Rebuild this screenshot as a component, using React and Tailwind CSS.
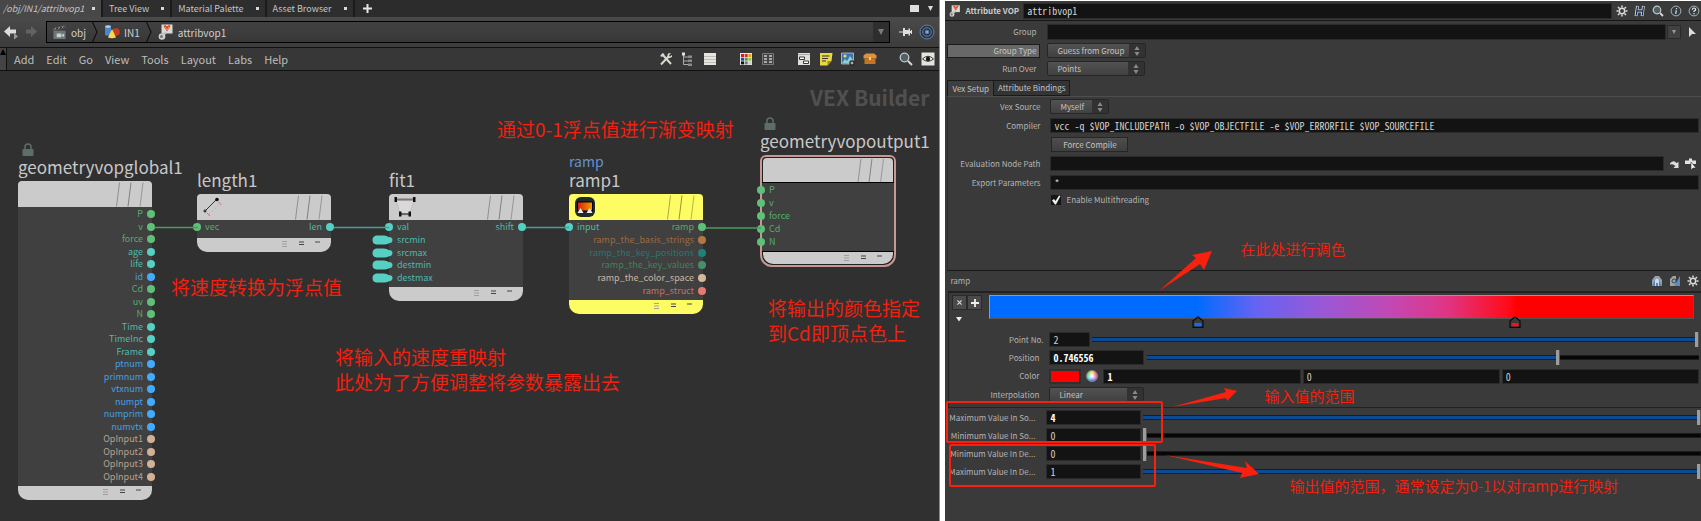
import React from "react";

const GREEN = { text: "text-[#55ab6b]", dot: "bg-[#5fc177]" };
const TEAL = { text: "text-[#4fb8ab]", dot: "bg-[#55d0c3]" };
const BLUE = { text: "text-[#459fe0]", dot: "bg-[#43abff]" };
const SAND = { text: "text-[#b9a08c]", dot: "bg-[#d0b196]" };
const BROWN = { text: "text-[#9c6a3f]", dot: "bg-[#b07740]" };
const DEEP = { text: "text-[#28766f]", dot: "bg-[#21817a]" };
const MOSS = { text: "text-[#44805d]", dot: "bg-[#469068]" };
const CREAM = { text: "text-[#c9b5a2]", dot: "bg-[#d5b898]" };
const ROSE = { text: "text-[#cc6c66]", dot: "bg-[#e37b72]" };

/* ---------- node graph ---------- */

function Port({ name, tone, side, pill }) {
  const dot = pill ? (
    <svg className="-ml-[17px] h-[10px] w-[21px] shrink-0" viewBox="0 0 21 10">
      <path d="M4.500 .5H12q3 0 4.500 1.500Q20.500 2 20.500 5T16.500 8.500Q15 9.500 12 9.500H4.500Q.5 9 .5 5T4.500.5Z" fill="#55d0c3" />
    </svg>
  ) : (
    <span className={"size-2 shrink-0 rounded-full " + tone.dot + (side === "in" ? " -ml-1" : " -mr-[3px]")} />
  );
  return (
    <li className={"flex h-3 items-center gap-1 text-[9px] leading-3 " + (side === "in" ? "flex-row" : "flex-row-reverse")}>
      {dot}
      <span className={tone.text}>{name}</span>
    </li>
  );
}

function Slashes({ dim }) {
  return (
    <svg className="ml-auto mr-[6px] h-full w-8" viewBox="0 0 32 25" fill="none" stroke={dim}>
      <path d="M5.500 1 2.500 25" strokeWidth="0.800" />
      <path d="M17 1 14 25" />
      <path d="M29 1 26 25" strokeWidth="0.700" />
    </svg>
  );
}

function Node({ place, title, kind, icon, inputs = [], outputs = [], yellow, selected, lock, body }) {
  const fill = yellow ? "bg-[#fdfd63]" : "bg-[#cbcbcb]";
  return (
    <section className={"absolute " + place}>
      <div className="absolute bottom-full left-0 flex flex-col whitespace-nowrap pb-1">
        {lock && <Lock />}
        {kind && <span className="text-[14px] leading-[18px] text-[#6490cd]">{kind}</span>}
        <h2 className="text-[17px] leading-5 text-[#c8c8c8]">{title}</h2>
      </div>
      <div className={selected ? "rounded-t-md rounded-b-xl border-2 border-[#c59896] bg-[#222] p-px" : ""}>
        <div className={"flex items-center rounded-t-[4px] pl-[5px] " + fill + (selected ? " h-6" : " h-[26px]")}>
          {icon}
          <Slashes dim={yellow ? "#96963c" : "#808080"} />
        </div>
        <div className={"grid bg-[#404040] pb-[3px] pt-px " + body + (selected ? " border-y border-black -mx-px" : "")}>
          <ul className={"col-start-1 row-start-1 flex flex-col justify-between justify-self-start" + (selected ? " -ml-px" : "")}>
            {inputs.map((p) => (
              <Port key={p[0]} name={p[0]} tone={p[1]} pill={p[2]} side="in" />
            ))}
          </ul>
          <ul className="col-start-1 row-start-1 flex flex-col justify-between justify-self-end">
            {outputs.map((p) => (
              <Port key={p[0]} name={p[0]} tone={p[1]} side="out" />
            ))}
          </ul>
        </div>
        <div className={"flex justify-end rounded-b-[10px] pr-[10px] " + fill + (selected ? " h-3" : " h-[14px]")}>
          <svg className="h-3 w-10" viewBox="0 0 40 12" fill="none">
            <path d="M1 3.500h5M1 6h5M1 8.500h5" stroke="#999" strokeWidth="0.900" />
            <path d="M18 4h5M18 6.500h5" stroke="#444" strokeWidth="1.200" />
            <path d="M34 4h5" stroke="#555" strokeWidth="1.100" />
          </svg>
        </div>
      </div>
    </section>
  );
}

function Lock() {
  return (
    <svg className="ml-1 h-[14px] w-3" viewBox="0 0 12 14">
      <path d="M3 7V4a3 3 0 0 1 6 0v3" fill="none" stroke="#5d6d69" strokeWidth="1.500" />
      <rect x="0.500" y="6" width="11" height="7" rx="1" fill="#5d6d69" />
    </svg>
  );
}

const LengthIcon = (
  <svg className="size-5" viewBox="0 0 20 20">
    <path d="M3 14 15 2" stroke="#333" />
    <circle cx="3" cy="14" r="1.200" fill="#555" stroke="#222" strokeWidth="0.600" />
    <circle cx="15" cy="2.500" r="1.800" fill="#111" />
    <path d="M7 17.500 18 7" stroke="#c99" strokeWidth="0.900" strokeDasharray="1.500 2.500" />
    <path d="m5 16 3 3M16.500 5l3 3" stroke="#c66" strokeWidth="0.900" />
  </svg>
);

const FitIcon = (
  <svg className="h-[22px] w-[22px]" viewBox="0 0 22 22">
    <path d="M2 4h18l-4.500 15h-9Z" fill="#d9d9d9" stroke="#c9a9a9" strokeWidth="0.600" />
    <path d="M2 3.500h18" stroke="#777" strokeWidth="2" />
    <path d="M6 18h10" stroke="#222" strokeWidth="1.200" />
    <path d="M.5 1h2.500v5H.5zM19 1h2.500v5H19zM5 15.500h2.500v5H5zM14.500 15.500H17v5h-2.500z" fill="#111" />
  </svg>
);

const RampIcon = (
  <svg className="h-[22px] w-[22px]" viewBox="0 0 22 22">
    <defs>
      <linearGradient id="fire">
        <stop offset="0" stopColor="#d81e05" />
        <stop offset="1" stopColor="#f0a000" />
      </linearGradient>
    </defs>
    <rect x="1" y="1" width="20" height="20" rx="6" fill="#1e2a2c" />
    <rect x="3.500" y="6" width="15" height="9" fill="url(#fire)" stroke="#000" />
    <path d="m6.500 12 3 5h-6zM15.500 12l3 5h-6z" fill="#eee" />
  </svg>
);

const globals = [
  ["P", GREEN], ["v", GREEN], ["force", GREEN], ["age", TEAL], ["life", TEAL], ["id", BLUE],
  ["Cd", GREEN], ["uv", GREEN], ["N", GREEN], ["Time", TEAL], ["TimeInc", TEAL], ["Frame", TEAL],
  ["ptnum", BLUE], ["primnum", BLUE], ["vtxnum", BLUE], ["numpt", BLUE], ["numprim", BLUE],
  ["numvtx", BLUE], ["OpInput1", SAND], ["OpInput2", SAND], ["OpInput3", SAND], ["OpInput4", SAND],
];

function Graph() {
  return (
    <main className="relative min-h-[450px] flex-1 overflow-hidden bg-[#303030]">
      <p className="absolute right-[10px] top-[10px] text-[21px] font-bold leading-8 text-[#505050]">VEX Builder</p>
      <Node place="left-[18px] top-[110px] w-[134px]" title="geometryvopglobal1" lock outputs={globals} body="h-[279px]" />
      <Node place="left-[197px] top-[123px] w-[134px]" title="length1" icon={LengthIcon} inputs={[["vec", GREEN]]} outputs={[["len", TEAL]]} body="h-[18px]" />
      <Node
        place="left-[389px] top-[123px] w-[134px]"
        title="fit1"
        icon={FitIcon}
        inputs={[["val", TEAL], ["srcmin", TEAL, true], ["srcmax", TEAL, true], ["destmin", TEAL, true], ["destmax", TEAL, true]]}
        outputs={[["shift", TEAL]]}
        body="h-[67px]"
      />
      <Node
        place="left-[569px] top-[123px] w-[134px]"
        title="ramp1"
        kind="ramp"
        yellow
        icon={RampIcon}
        inputs={[["input", TEAL]]}
        outputs={[
          ["ramp", GREEN], ["ramp_the_basis_strings", BROWN], ["ramp_the_key_positions", DEEP],
          ["ramp_the_key_values", MOSS], ["ramp_the_color_space", CREAM], ["ramp_struct", ROSE],
        ]}
        body="h-[80px]"
      />
      <Node
        place="left-[760px] top-[84px] w-[136px]"
        title="geometryvopoutput1"
        lock
        selected
        inputs={[["P", GREEN], ["v", GREEN], ["force", GREEN], ["Cd", GREEN], ["N", GREEN]]}
        body="h-[70px]"
      />
      <svg className="pointer-events-none absolute left-0 top-0 h-[450px] w-[940px]" viewBox="0 0 940 450" strokeWidth="1.300">
        <path d="M154 156.500H198M706 157H761" stroke="#4c9a62" />
        <path d="M334 156.500H389M526 156.500H569" stroke="#459f96" />
      </svg>
      <Note place="left-[497px] top-[45px]">通过0-1浮点值进行渐变映射</Note>
      <Note place="left-[171px] top-[203px]">将速度转换为浮点值</Note>
      <Note place="left-[335px] top-[273px]">
        将输入的速度重映射
        <br />
        此处为了方便调整将参数暴露出去
      </Note>
      <Note place="left-[768px] top-[224px]">
        将输出的颜色指定
        <br />
        到Cd即顶点色上
      </Note>
    </main>
  );
}

function Note({ place, small, children }) {
  return (
    <p className={"absolute whitespace-nowrap text-[#f2200f] " + (small ? "text-[15px] leading-5 " : "text-[19px] leading-[25px] ") + place}>
      {children}
    </p>
  );
}

/* ---------- left pane bars ---------- */

function Tab({ children, active }) {
  return (
    <div
      className={
        "flex h-full items-center border-r-2 border-[#1b1b1b] text-[9px] " +
        (active ? "w-[103px] bg-[#484848] pl-[3px] pr-1 italic text-[#c4c4c4]" : "gap-[10px] bg-[#2e2e2e] pl-[6px] pr-1 text-[#c4c4c4]")
      }
    >
      <button className="flex-1 text-left">{children}</button>
      <button aria-label="Close tab" className="flex size-[7px] items-center justify-center">
        <span className="size-[3px] bg-[#d8d8d8]" />
      </button>
    </div>
  );
}

function Chevron() {
  return (
    <svg className="h-5 w-[6px]" viewBox="0 0 6 20" fill="none">
      <path d="M.5 0 5 10 .5 20" stroke="#111" strokeWidth="1.200" />
    </svg>
  );
}

function VopIcon({ className }) {
  return (
    <svg className={className} viewBox="0 0 16 16">
      <rect x="3.500" y="0.500" width="11" height="9" fill="#d9d9d9" />
      <path d="m5.500 2 1.500-1 2 1.500L11 1l1.500 1L9 7.500Z" fill="#d33e25" />
      <path d="M7 2.500 9 6l2-3.500" stroke="#e7a334" fill="none" />
      <path d="M8 8.500 5.500 11" stroke="#bbb" strokeWidth="2" />
      <circle cx="4" cy="12.500" r="3.300" fill="#cfcfcf" />
      <circle cx="3.500" cy="12.500" r="1.500" fill="#777" />
    </svg>
  );
}

function PathBar() {
  return (
    <div className="flex h-[30px] items-center bg-linear-to-b from-[#4a4a4a] to-[#3c3c3c] pl-[3px] pr-1">
      <button aria-label="Back" className="size-4">
        <svg viewBox="0 0 16 16">
          <path d="M1 7.500 7 2v3.500h6v4H7V13Z" fill="#deded8" />
          <path d="m11 9 4 3.500-4 3Z" fill="#999" />
        </svg>
      </button>
      <button aria-label="Forward" className="ml-1 size-4">
        <svg viewBox="0 0 16 16">
          <path d="M14 7.500 8 2v3.500H3v4h5V13Z" fill="#626262" />
        </svg>
      </button>
      <nav className="ml-[7px] flex h-[22px] flex-1 items-center border border-black bg-linear-to-b from-[#414141] to-[#383838] text-[10px] text-[#cfcfcf]">
        <a href="#obj" className="flex items-center gap-1 pl-[5px] pr-[6px]">
          <svg className="size-[15px]" viewBox="0 0 16 16">
            <path d="m1 4 13-3.500.5 2L1.500 6Z" fill="#333" stroke="#777" strokeWidth="0.500" />
            <path d="m3 5 1-2m3 1 1-2m3 1 1-2" stroke="#aaa" />
            <rect x="1.500" y="6" width="13" height="9" fill="#6b7676" />
            <path d="M5 9h5v4H5zM10 11l3-2v4Z" fill="#c9cfcf" />
          </svg>
          obj
        </a>
        <Chevron />
        <a href="#in1" className="flex items-center gap-1 pl-[6px] pr-[6px]">
          <svg className="size-4" viewBox="0 0 16 16">
            <path d="M1 2.500q3-1.500 6 0V11q-3 1.500-6 0Z" fill="#4b86cf" />
            <ellipse cx="4" cy="2.600" rx="3" ry="1.300" fill="#a9cbef" />
            <circle cx="12" cy="8" r="3.800" fill="#cb3a21" />
            <path d="m8 5 4 8.500q-4 1.500-8 0Z" fill="#f5dc4a" />
          </svg>
          IN1
        </a>
        <Chevron />
        <a href="#attribvop1" className="flex items-center gap-1 pl-[6px]">
          <VopIcon className="size-4" />
          attribvop1
        </a>
        <button aria-label="Path history" className="ml-auto flex h-full w-4 items-center justify-center bg-[#2e2e2e]">
          <svg className="size-[6px]" viewBox="0 0 6 6">
            <path d="M0 0h6L3 6Z" fill="#7b7b7b" />
          </svg>
        </button>
      </nav>
      <button aria-label="Pin" className="ml-2 h-4 w-[15px]">
        <svg viewBox="0 0 15 16" fill="#dedede">
          <path d="M1 7.500h5v1H1zM5 4h2v8H5zM7 6h3.500v4H7zM10.500 4.500h1.500V7h1v2h-1v2.500h-1.500zM13 6h1v4h-1z" />
        </svg>
      </button>
      <button aria-label="Follow selection" className="ml-[6px] size-4">
        <svg viewBox="0 0 16 16" fill="none" stroke="#5f80ab">
          <circle cx="8" cy="8" r="7" fill="#2b3442" />
          <circle cx="8" cy="8" r="4.300" />
          <circle cx="8" cy="8" r="1.800" fill="#7ca6dc" />
        </svg>
      </button>
    </div>
  );
}

function Tool({ label, gap, children }) {
  return (
    <button aria-label={label} className={"size-[14px] " + (gap || "ml-[8px]")}>
      <svg viewBox="0 0 14 14">{children}</svg>
    </button>
  );
}

function MenuBar() {
  const menus = ["Add", "Edit", "Go", "View", "Tools", "Layout", "Labs", "Help"];
  return (
    <div className="flex h-6 items-center border-y border-[#111] bg-[#373737] pr-1">
      <button aria-label="Collapse" className="mr-[7px] flex h-full w-[7px] items-start border-r border-[#111] bg-[#444]">
        <svg className="mt-px h-[6px] w-[6px]" viewBox="0 0 6 6">
          <path d="M3 0 6 6H0Z" fill="#000" />
        </svg>
      </button>
      <div className="flex gap-3 text-[11px] leading-5 text-[#bdbdbd]">
        {menus.map((m) => (
          <button key={m}>{m}</button>
        ))}
      </div>
      <div className="ml-auto flex items-center">
        <Tool label="Tools" gap="ml-0">
          <path d="M2 12.500 9 5M3 2l9 10" stroke="#d8d8d0" strokeWidth="2" />
          <path d="M1 4 4 1l1.500 1.500L3 5ZM9 1.500 8 5l1.500 1.500L13 5V3l-2 1.500L10 3.500 12 1Z" fill="#d8d8d0" />
        </Tool>
        <Tool label="Tree">
          <path d="M2.500 2v10.500h5M2.500 5H8M2.500 9H8" stroke="#aaa" fill="none" />
          <path d="M1 .5h3v3H1z" fill="#e2e2e2" />
          <path d="M7 3.500h4V6H7zM7 7.500h4V10H7zM7 11.500h4V14H7z" fill="#8c8c8c" />
        </Tool>
        <Tool label="List">
          <path d="M1 1h12v12H1z" fill="#e5e5de" />
          <path d="M1 4.500h12M1 7.500h12M1 10.500h12" stroke="#b5b5ad" strokeWidth="0.800" />
        </Tool>
        <Tool label="Palette" gap="ml-[22px]">
          <path d="M1 1h12v12H1z" fill="#e8e8e8" />
          <path d="M2 2h3v3H2z" fill="#e11" />
          <path d="M5.700 2h3v3h-3z" fill="#c33" />
          <path d="M9.400 2h3v3h-3z" fill="#e9a21b" />
          <path d="M2 5.700h3v3H2z" fill="#234b96" />
          <path d="M5.700 5.700h3v3h-3z" fill="#4a9a3c" />
          <path d="M9.400 5.700h3v3h-3z" fill="#8dc63f" />
          <path d="M2 9.400h3v3H2z" fill="#111" />
          <path d="M5.700 9.400h3v3h-3z" fill="#777" />
          <path d="M9.400 9.400h3v3h-3z" fill="#ccc" />
        </Tool>
        <Tool label="Table">
          <path d="M1.500 1.500h11v11h-11z" fill="#444" stroke="#777" />
          <path d="M3 4h3M8 4h3M3 7h3M8 7h3M3 10h3M8 10h3" stroke="#ccc" strokeWidth="1.300" />
        </Tool>
        <Tool label="Network box" gap="ml-[22px]">
          <path d="M1 1h12v12H1z" fill="#e0e0da" />
          <path d="M1 2.500h12" stroke="#999" strokeWidth="0.800" />
          <path d="M2.500 5h5v2.500h-5zM6.500 9h5v2.500h-5z" fill="#fff" stroke="#222" strokeWidth="0.900" />
        </Tool>
        <Tool label="Sticky note">
          <path d="M1 1h12.500l-1 8-4 4.500H1Z" fill="#ecd842" />
          <path d="m12.500 9-4 4.500V9Z" fill="#9b8b20" />
          <path d="M3 4h7.500M3 6.500h6M3 9h4" stroke="#333" strokeWidth="1.100" />
        </Tool>
        <Tool label="Background image">
          <path d="M.5 1h12v11H.5z" fill="#3f74b3" stroke="#cfd8dd" strokeWidth="0.700" />
          <path d="m1 11 3-4 2 2 3-5 3 4v4Z" fill="#8ecfd0" />
          <circle cx="4" cy="4" r="1.500" fill="#f3dd4b" />
          <circle cx="11" cy="11" r="2.700" fill="#222" />
          <path d="M9.500 11h3M11 9.500v3" stroke="#fff" strokeWidth="0.800" />
        </Tool>
        <Tool label="Gallery">
          <path d="M.5 3.500 3 1.500h8l2.500 2V6.500H.5Z" fill="#e0923a" />
          <path d="M1.500 6.500h11v5.500h-11Z" fill="#c57422" />
          <path d="M6 5h2v3H6z" fill="#f6cf8f" />
        </Tool>
        <Tool label="Find" gap="ml-[22px]">
          <circle cx="5.500" cy="5.500" r="4.300" fill="#50616a" stroke="#c4c8c8" strokeWidth="1.300" />
          <path d="m9 9 4 4" stroke="#d8d8d8" strokeWidth="2" />
        </Tool>
        <Tool label="Display options">
          <path d="M.5.5h13v13H.5z" fill="#e4e4de" />
          <path d="M1.500 7Q7 1.500 12.500 7 7 11.500 1.500 7Z" fill="#fff" stroke="#333" />
          <circle cx="7" cy="7" r="2.300" fill="#1a1a1a" />
        </Tool>
      </div>
    </div>
  );
}

/* ---------- parameter pane ---------- */

const fieldBase = "min-w-0 border border-[#2b2b2b] bg-[#131313] px-[3px] font-['Noto_Sans_Mono_CJK_SC','DejaVu_Sans_Mono',monospace] text-[10px] leading-3 outline-none ";
const field = fieldBase + "h-[15px] text-[#cfcfcf] ";
const boldField = fieldBase + "h-[15px] font-bold text-white ";
const tallField = fieldBase + "h-4 text-[#cfcfcf] ";

function Label({ htmlFor, children, wide = "w-[94px]" }) {
  return (
    <label htmlFor={htmlFor} className={"shrink-0 whitespace-nowrap text-right text-[8px] leading-3 text-[#b4b4b4] " + wide}>
      {children}
    </label>
  );
}

function Picker({ id, value, width }) {
  return (
    <div className={"grid h-[15px] shrink-0 rounded-[2px] border border-[#262626] bg-linear-to-b from-[#525252] to-[#414141] " + width}>
      <select
        id={id}
        className="col-start-1 row-start-1 appearance-none bg-transparent pl-[9px] text-[8px] leading-3 text-[#c4c4c4] outline-none"
      >
        <option>{value}</option>
      </select>
      <span className="pointer-events-none col-start-1 row-start-1 ml-auto flex h-full w-4 items-center justify-center bg-[#323232]">
        <svg className="h-[10px] w-[6px]" viewBox="0 0 6 10" fill="#8a8a8a">
          <path d="m3 0 2.500 4h-5ZM3 10 .5 6h5Z" />
        </svg>
      </span>
    </div>
  );
}

function Slider({ label, value, max = 1 }) {
  const pct = (value / max) * 100;
  return (
    <input
      type="range"
      aria-label={label}
      min="0"
      max={max}
      step="any"
      defaultValue={value}
      className="h-[15px] min-w-0 flex-1 appearance-none bg-[length:100%_5px] bg-center bg-no-repeat outline-none [&::-webkit-slider-thumb]:h-[15px] [&::-webkit-slider-thumb]:w-1 [&::-webkit-slider-thumb]:appearance-none [&::-webkit-slider-thumb]:border-r [&::-webkit-slider-thumb]:border-[#555] [&::-webkit-slider-thumb]:bg-[#9c9c9c]"
      style={{
        backgroundImage: `linear-gradient(180deg, #1c1c1c 1px, transparent 1px, transparent 4px, #1c1c1c 4px), linear-gradient(90deg, #0c4a94 ${pct}%, #060606 ${pct}%)`,
      }}
    />
  );
}

function Gear() {
  return (
    <g fill="none" stroke="#dcdcdc">
      <circle cx="6" cy="6" r="2.700" strokeWidth="1.500" />
      <path d="M6 .5v2M6 9.500v2M.5 6h2M9.500 6h2M2 2l1.500 1.500M8.500 8.500 10 10M10 2 8.500 3.500M3.500 8.500 2 10" strokeWidth="1.500" />
    </g>
  );
}

function SmallIcon({ label, children }) {
  return (
    <button aria-label={label} className="size-3 shrink-0">
      <svg viewBox="0 0 12 12">{children}</svg>
    </button>
  );
}

function SpareRow({ id, label, value, slide, max, bold }) {
  return (
    <div className="flex items-center">
      <Label htmlFor={id} wide="w-[90px]">{label}</Label>
      <input id={id} defaultValue={value} className={(bold ? boldField : field) + "ml-[11px] w-[95px]"} />
      <span className="w-[2px]" />
      <Slider label={label + " slider"} value={slide} max={max} />
    </div>
  );
}

function Marker({ color, at }) {
  return (
    <svg className="absolute top-5 h-3 w-3 -translate-x-1/2" viewBox="0 0 12 12" style={{ left: at }}>
      <path d="M1 11.300V5L6 .8 11 5v6.300Z" fill="#3a3a3a" stroke="#0b0b0b" strokeWidth="1.200" />
      <path d="M2.500 7h7v3.300h-7z" fill={color} />
    </svg>
  );
}

function Parameters() {
  return (
    <aside className="relative mt-px flex min-w-0 flex-[756_1_0%] flex-col overflow-hidden bg-[#3a3a3a]">
      <header className="flex h-5 items-center gap-1 border-b border-[#161616] pl-1 pr-px">
        <VopIcon className="size-3 shrink-0" />
        <h1 className="whitespace-nowrap text-[8px] font-bold text-[#cccccc]">Attribute VOP</h1>
        <input aria-label="Operator name" defaultValue="attribvop1" className={tallField + "flex-1"} />
        <div className="flex gap-[6px]">
          <SmallIcon label="Settings"><Gear /></SmallIcon>
          <SmallIcon label="Houdini help">
            <path d="M3.500 1 2 11M9.500 1 8 11M3 6h6" stroke="#e3e3e3" strokeWidth="2.800" />
            <path d="M3.500 1.500 2.200 10.500M9.500 1.500 8.200 10.500M3 6h6" stroke="#12305a" strokeWidth="1.400" />
          </SmallIcon>
          <SmallIcon label="Search">
            <circle cx="5" cy="5" r="3.800" fill="#50616a" stroke="#c4c8c8" strokeWidth="1.200" />
            <path d="m8 8 3 3" stroke="#d8d8d8" strokeWidth="1.800" />
          </SmallIcon>
          <SmallIcon label="Info">
            <circle cx="6" cy="6" r="4.900" fill="#333c40" stroke="#a9b3b3" />
            <path d="M6.500 3v1.200M6.300 5.200 5.700 9" stroke="#e0e0e0" strokeWidth="1.200" />
          </SmallIcon>
          <SmallIcon label="Help">
            <circle cx="6" cy="6" r="4.900" fill="#333c40" stroke="#a9b3b3" />
            <path d="M4.300 4.700Q4.500 3 6 3t1.700 1.500Q7.700 5.500 6 6.200V7M6 8v1.200" fill="none" stroke="#eee" strokeWidth="1.200" />
          </SmallIcon>
        </div>
      </header>

      <div className="flex flex-col gap-[3px] pb-1 pl-[2px] pt-[3px]">
        <div className="flex items-center pr-1">
          <Label htmlFor="group" wide="w-[89px]">Group</Label>
          <input id="group" className={tallField + "ml-[11px] flex-1"} />
          <button aria-label="Group menu" className="ml-px flex size-[14px] items-center justify-center border border-[#2a2a2a] bg-[#414141]">
            <svg className="size-1" viewBox="0 0 6 6"><path d="M0 0h6L3 6Z" fill="#999" /></svg>
          </button>
          <button aria-label="Pick group" className="ml-1 size-3">
            <svg viewBox="0 0 12 12"><path d="M4 1v10l3-3h4Z" fill="#dedede" /></svg>
          </button>
        </div>
        <div className="flex h-[15px] items-center">
          <label htmlFor="grouptype" className="h-[14px] w-[93px] border border-[#1c1c1c] bg-[#686868] pr-[3px] text-right text-[8px] leading-3 text-[#c4c4c4]">
            Group Type
          </label>
          <span className="w-[7px]" />
          <Picker id="grouptype" value="Guess from Group" width="w-[99px]" />
        </div>
        <div className="flex items-center">
          <Label htmlFor="runover" wide="w-[89px]">Run Over</Label>
          <span className="w-[11px]" />
          <Picker id="runover" value="Points" width="w-[98px]" />
        </div>
      </div>

      <div role="tablist" className="flex h-4 pl-[2px] text-[8px] leading-[14px] text-[#c4c4c4]">
        <button role="tab" aria-selected="true" className="border border-b-0 border-[#1a1a1a] bg-[#3f3f3f] px-1">Vex Setup</button>
        <button role="tab" aria-selected="false" className="border border-l-0 border-[#1a1a1a] bg-[#343434] px-1">Attribute Bindings</button>
      </div>
      <section className="ml-[2px] flex h-[175px] shrink-0 flex-col gap-1 border-b border-l border-t border-b-[#181818] border-l-[#2b2b2b] border-t-[#4d4d4d] pr-[2px] pt-[2px]">
        <div className="flex items-center gap-[10px]">
          <Label htmlFor="vexsource" wide="w-[92px]">Vex Source</Label>
          <Picker id="vexsource" value="Myself" width="w-[59px]" />
        </div>
        <div className="flex items-center gap-[10px]">
          <Label htmlFor="compiler" wide="w-[92px]">Compiler</Label>
          <input id="compiler" defaultValue="vcc -q $VOP_INCLUDEPATH -o $VOP_OBJECTFILE -e $VOP_ERRORFILE $VOP_SOURCEFILE" className={field + "flex-1"} />
        </div>
        <button className="ml-[103px] h-[15px] w-[77px] border border-[#262626] bg-linear-to-b from-[#4e4e4e] to-[#3f3f3f] text-[8px] leading-3 text-[#c4c4c4]">
          Force Compile
        </button>
        <div className="flex items-center gap-[10px]">
          <Label htmlFor="evalpath" wide="w-[92px]">Evaluation Node Path</Label>
          <input id="evalpath" className={field + "flex-1"} />
          <div className="-ml-[5px] flex gap-1 pr-[2px]">
            <SmallIcon label="Jump to operator">
              <path d="M1 5.500q3.500-4 6.500-.5L9.500 4v6H4.500l1.800-2Q4.500 5.500 1 6.500Z" fill="#dcdcdc" />
            </SmallIcon>
            <SmallIcon label="Choose operator">
              <path d="M0 2.500h11v3.500H0zM4 .5h3v2H4z" fill="#e2e2e2" />
              <path d="M6 4v8l2-2h3Z" fill="#fff" stroke="#333" strokeWidth="0.600" />
            </SmallIcon>
          </div>
        </div>
        <div className="flex items-center gap-[10px]">
          <Label htmlFor="export" wide="w-[92px]">Export Parameters</Label>
          <input id="export" defaultValue="*" className={field + "flex-1"} />
        </div>
        <label className="ml-[103px] flex items-center gap-[5px] text-[8px] leading-3 text-[#b4b4b4]">
          <span className="grid size-[10px] bg-[#151515]">
            <input type="checkbox" defaultChecked className="peer col-start-1 row-start-1 size-[10px] appearance-none" />
            <svg className="pointer-events-none invisible col-start-1 row-start-1 size-[10px] peer-checked:visible" viewBox="0 0 10 10">
              <path d="M1 5.500 3 4l1.500 2L8 .5l1.500.5L5 9.500H4Z" fill="#eee" />
            </svg>
          </span>
          Enable Multithreading
        </label>
      </section>

      <div className="flex h-5 items-center gap-[6px] pl-[5px] pr-[2px]">
        <h2 className="mr-auto text-[8px] text-[#b4b4b4]">ramp</h2>
        <SmallIcon label="Ramp to points">
          <path d="M1 11V5l3-4h4l3 4v6Z" fill="#8fa3ae" />
          <path d="M1 11 4 5h4l3 6Z" fill="#4f86c4" />
          <path d="M4 11V5q2-3 4 0v6H7V8H5v3Z" fill="#cfd8dc" />
        </SmallIcon>
        <SmallIcon label="Flip ramp">
          <path d="M1 11V4l3-3h3v10Z" fill="#9da5a8" />
          <path d="M5 11 11 1v10Z" fill="#5b8cc4" />
          <circle cx="5" cy="6" r="2" fill="none" stroke="#444" />
        </SmallIcon>
        <SmallIcon label="Ramp settings"><Gear /></SmallIcon>
      </div>

      <section className="ml-[3px] h-[117px] shrink-0 border-b border-l border-t-2 border-[#222] pr-[2px]">
        <div className="flex h-[39px] pl-[3px] pt-[2px]">
          <div className="w-[37px]">
            <div className="flex">
              <button aria-label="Remove point" className="flex size-[15px] items-center justify-center border border-[#2a2a2a] bg-[#4a4a4a]">
                <svg className="size-[5px]" viewBox="0 0 6 6"><path d="m.5.5 5 5m0-5-5 5" stroke="#ddd" strokeWidth="1.300" /></svg>
              </button>
              <button aria-label="Add point" className="flex size-[15px] items-center justify-center border border-[#2a2a2a] bg-[#4a4a4a]">
                <svg className="size-2" viewBox="0 0 8 8"><path d="M4 0v8M0 4h8" stroke="#eee" strokeWidth="1.800" /></svg>
              </button>
            </div>
            <button aria-label="Collapse ramp" className="ml-1 mt-[6px] flex size-[6px]">
              <svg viewBox="0 0 6 6"><path d="M0 1h6L3 5.500Z" fill="#eee" /></svg>
            </button>
          </div>
          <div className="relative mr-[5px] h-6 flex-1 border border-[#999] border-b-[#555] border-r-[#555] bg-[linear-gradient(90deg,#006cff_29.5%,#6763f2_38%,#9858d8_47%,#c248b4_57%,#e03584_65%,#ff0a14_74%,#ff0000_75%)]">
            <Marker color="#0a6cff" at="29.5%" />
            <Marker color="#ff1010" at="74.66%" />
          </div>
        </div>
        <div className="flex flex-col gap-[3px]">
          <div className="flex items-center">
            <Label htmlFor="pointno">Point No.</Label>
            <input id="pointno" defaultValue="2" className={field + "ml-[6px] w-[41px]"} />
            <span className="w-[2px]" />
            <Slider label="Point number slider" value={2} max={2} />
          </div>
          <div className="flex items-center">
            <Label htmlFor="position" wide="w-[90px]">Position</Label>
            <input id="position" defaultValue="0.746556" className={boldField + "ml-[10px] w-[95px]"} />
            <span className="w-[3px]" />
            <Slider label="Position slider" value={0.746556} />
          </div>
          <div className="flex h-4 items-center">
            <Label htmlFor="red" wide="w-[90px]">Color</Label>
            <button aria-label="Color swatch" className="ml-[10px] h-[15px] w-8 border-2 border-[#303030] bg-[#ff0000]" />
            <button aria-label="Color wheel" className="mx-[5px] size-3 rounded-full border border-[#888] bg-[radial-gradient(circle,#fff_10%,transparent_70%),conic-gradient(#f7d84a,#f0545a,#c45de0,#4b6df0,#40d8d0,#5fd45a,#f7d84a)]" />
            <div className="flex flex-1 gap-[2px]">
              <input id="red" defaultValue="1" className={boldField + "h-4 flex-1"} />
              <input aria-label="Green" defaultValue="0" className={field + "h-4 flex-1"} />
              <input aria-label="Blue" defaultValue="0" className={field + "h-4 flex-1"} />
            </div>
          </div>
          <div className="flex items-center">
            <Label htmlFor="interp" wide="w-[90px]">Interpolation</Label>
            <span className="w-[10px]" />
            <Picker id="interp" value="Linear" width="w-[95px]" />
          </div>
        </div>
      </section>

      <div className="flex flex-col gap-[3px] pt-[2px]">
        <SpareRow id="maxsrc" label="Maximum Value In So..." value="4" slide={1} bold />
        <SpareRow id="minsrc" label="Minimum Value In So..." value="0" slide={0} />
        <SpareRow id="mindst" label="Minimum Value In De..." value="0" slide={0} />
        <SpareRow id="maxdst" label="Maximum Value In De..." value="1" slide={1} />
      </div>

      <svg className="pointer-events-none absolute left-0 top-0 h-[520px] w-[756px]" viewBox="945 1 756 520" fill="#f8200e">
        <rect x="947" y="402" width="215" height="40" rx="1" fill="none" stroke="#f8200e" strokeWidth="2" />
        <rect x="950" y="445" width="205" height="41" rx="1" fill="none" stroke="#f8200e" strokeWidth="2" />
        <path d="M1159 291 1196 258 1192 255 1212 251 1204 270 1200 264Z" />
        <path d="M1172 407 1226 392 1224 388 1237 391 1227 401 1226 398Z" />
        <path d="M1165 455 1247 468 1245 461 1259 474 1240 478 1242 473Z" />
      </svg>
      <Note small place="left-[295px] top-[238px]">在此处进行调色</Note>
      <Note small place="left-[319px] top-[385px]">输入值的范围</Note>
      <Note small place="left-[344px] top-[475px]">输出值的范围，通常设定为0-1以对ramp进行映射</Note>
    </aside>
  );
}

export default function App() {
  return (
    <div className="flex min-h-screen gap-[5px] bg-white font-['Noto_Sans_CJK_SC',sans-serif]">
      <div className="flex min-w-0 flex-[940_1_0%] flex-col border-r border-[#8a8a8a] bg-[#303030]">
        <div className="flex h-[17px] items-center bg-[#2c2c2c]">
          <Tab active>/obj/IN1/attribvop1</Tab>
          <Tab>Tree View</Tab>
          <Tab>Material Palette</Tab>
          <Tab>Asset Browser</Tab>
          <button aria-label="New tab" className="ml-2 size-[9px]">
            <svg viewBox="0 0 9 9"><path d="M4.500 0v9M0 4.500h9" stroke="#e6e6e6" strokeWidth="2" /></svg>
          </button>
          <button aria-label="Maximize pane" className="ml-auto h-[7px] w-[9px] bg-[#dedede]" />
          <button aria-label="Pane menu" className="ml-[9px] mr-[6px] size-[5px]">
            <svg viewBox="0 0 6 6"><path d="M0 0h6L3 6Z" fill="#dedede" /></svg>
          </button>
        </div>
        <PathBar />
        <MenuBar />
        <Graph />
      </div>
      <Parameters />
    </div>
  );
}
